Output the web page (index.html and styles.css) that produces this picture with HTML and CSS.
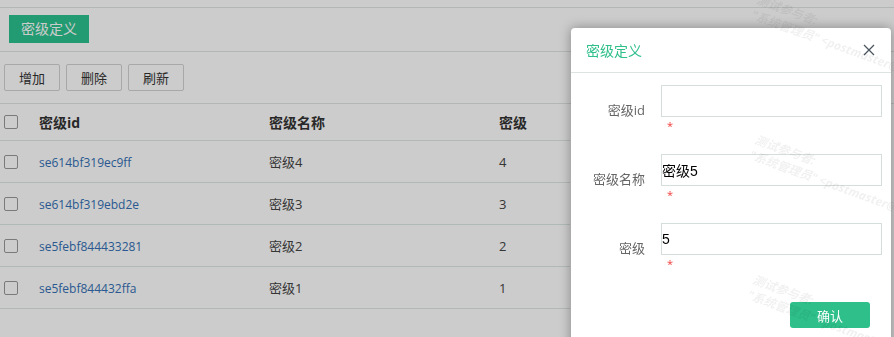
FILE: index.html
```html
<!DOCTYPE html>
<html lang="zh-CN">
<head>
    <meta charset="UTF-8">
    <meta name="viewport" content="width=device-width, initial-scale=1.0">
    <title>密级定义</title>
    <link rel="stylesheet" href="styles.css">
</head>
<body>
    <div class="page">
        <div class="top-strip"></div>

        <div class="tab-bar">
            <span class="tab">密级定义</span>
        </div>

        <div class="toolbar">
            <button class="btn">增加</button>
            <button class="btn">删除</button>
            <button class="btn">刷新</button>
        </div>

        <table class="grid">
            <thead>
                <tr>
                    <th class="col-check"><span class="checkbox"></span></th>
                    <th class="col-id">密级id</th>
                    <th class="col-name">密级名称</th>
                    <th class="col-level">密级</th>
                </tr>
            </thead>
            <tbody>
                <tr>
                    <td class="col-check"><span class="checkbox"></span></td>
                    <td class="col-id"><a class="link">se614bf319ec9ff</a></td>
                    <td>密级4</td>
                    <td>4</td>
                </tr>
                <tr>
                    <td class="col-check"><span class="checkbox"></span></td>
                    <td class="col-id"><a class="link">se614bf319ebd2e</a></td>
                    <td>密级3</td>
                    <td>3</td>
                </tr>
                <tr>
                    <td class="col-check"><span class="checkbox"></span></td>
                    <td class="col-id"><a class="link">se5febf844433281</a></td>
                    <td>密级2</td>
                    <td>2</td>
                </tr>
                <tr>
                    <td class="col-check"><span class="checkbox"></span></td>
                    <td class="col-id"><a class="link">se5febf844432ffa</a></td>
                    <td>密级1</td>
                    <td>1</td>
                </tr>
            </tbody>
        </table>
    </div>

    <div class="mask"></div>

    <div class="dialog">
        <div class="dialog-head">
            <span class="dialog-title">密级定义</span>
            <svg class="dialog-close" width="12" height="12" viewBox="0 0 12 12">
                <path d="M1 1 L11 11 M11 1 L1 11" stroke="#4a5560" stroke-width="1.3" fill="none"/>
            </svg>
        </div>

        <div class="dialog-body">
            <div class="field">
                <label class="field-label">密级id</label>
                <div class="field-control">
                    <input class="field-input" type="text" value="">
                    <span class="req">*</span>
                </div>
            </div>
            <div class="field">
                <label class="field-label">密级名称</label>
                <div class="field-control">
                    <input class="field-input" type="text" value="密级5">
                    <span class="req">*</span>
                </div>
            </div>
            <div class="field">
                <label class="field-label">密级</label>
                <div class="field-control">
                    <input class="field-input" type="text" value="5">
                    <span class="req">*</span>
                </div>
            </div>
        </div>

        <div class="dialog-foot">
            <button class="btn-ok">确认</button>
        </div>
    </div>

    <!-- watermark tiles -->
    <div class="wm wm-1"><div>测试参与者:</div><div>"系统管理员" &lt;postmaster@root&gt;</div></div>
    <div class="wm wm-2"><div>测试参与者:</div><div>"系统管理员" &lt;postmaster@root&gt;</div></div>
    <div class="wm wm-3"><div>测试参与者:</div><div>"系统管理员" &lt;postmaster@root&gt;</div></div>
</body>
</html>
```

FILE: styles.css
```css
html, body {
    margin: 0;
    padding: 0;
    height: 100%;
    overflow: hidden;
}
body {
    font-family: "Open Sans", "Noto Sans CJK SC", sans-serif;
    font-size: 13px;
    color: #333;
    background: #fff;
}
.top-strip {
    height: 7px;
    border-bottom: 1px solid #dfe5e2;
}
.tab-bar {
    height: 44px;
    padding: 7px 0 0 9px;
    box-sizing: border-box;
    border-bottom: 1px solid #dfe5e2;
}
.tab {
    display: inline-block;
    width: 80px;
    height: 28px;
    line-height: 28px;
    text-align: center;
    background: #2cc28f;
    color: #fff;
    font-size: 14px;
}
.toolbar {
    display: flex;
    gap: 6px;
    height: 52px;
    padding: 12px 0 0 4px;
    box-sizing: border-box;
    border-bottom: 1px solid #dfe5e2;
}
.btn {
    width: 56px;
    height: 27px;
    background: #fff;
    border: 1px solid #d2d2d2;
    border-radius: 2px;
    font-family: inherit;
    font-size: 13px;
    color: #333;
    padding: 0;
}
.grid {
    width: 570px;
    border-collapse: collapse;
}
.grid th, .grid td {
    text-align: left;
    padding: 0;
    border-bottom: 1px solid #dee8e5;
    vertical-align: middle;
}
.grid th {
    height: 36px;
    font-size: 14px;
    font-weight: bold;
    color: #333;
}
.grid td {
    height: 41px;
    color: #444;
}
.col-check {
    width: 35px;
    padding-left: 4px !important;
}
.col-id {
    width: 230px;
}
.col-name {
    width: 230px;
}
.checkbox {
    display: block;
    width: 12px;
    height: 12px;
    border: 1px solid #999;
    border-radius: 2px;
    background: #fff;
}
.link {
    color: #3470b5;
    text-decoration: none;
    font-size: 12px;
}
.mask {
    position: fixed;
    inset: 0;
    background: rgba(0, 0, 0, 0.2);
}
.dialog {
    position: absolute;
    left: 571px;
    top: 28px;
    width: 320px;
    height: 340px;
    background: #fff;
    border-radius: 4px 4px 0 0;
    box-shadow: 0 0 12px rgba(0, 0, 0, 0.35);
}
.dialog-head {
    display: flex;
    align-items: center;
    justify-content: space-between;
    height: 44px;
    padding: 0 16px 0 15px;
    border-bottom: 1px solid #dde3e0;
}
.dialog-title {
    color: #2ebf8b;
    font-size: 14px;
}
.dialog-body {
    padding: 12px 9px 0 0;
}
.field {
    display: flex;
}
.field-label {
    width: 74px;
    margin-right: 16px;
    padding-top: 16px;
    text-align: right;
    color: #666;
    font-size: 13px;
    line-height: 18px;
}
.field-control {
    flex: 1;
    display: flex;
    flex-direction: column;
    padding-bottom: 23px;
}
.field-input {
    height: 32px;
    box-sizing: border-box;
    border: 1px solid #d6dedb;
    padding: 0;
    font-family: "Liberation Sans", "Noto Sans CJK SC", sans-serif;
    font-size: 14px;
    color: #000;
    outline: none;
}
.req {
    color: #f03c3c;
    font-size: 11px;
    line-height: 14px;
    margin: 2px 0 -2px 6px;
}
.dialog-foot {
    display: flex;
    justify-content: flex-end;
    padding: 10px 21px 0 0;
}
.btn-ok {
    width: 80px;
    height: 26px;
    background: #2ebf8b;
    border: none;
    border-radius: 3px;
    color: #fff;
    font-family: inherit;
    font-size: 13px;
    padding: 0;
}
.wm {
    position: absolute;
    transform: rotate(20deg);
    transform-origin: left top;
    white-space: nowrap;
    color: rgba(0, 0, 0, 0.06);
    font-size: 12px;
    font-weight: bold;
    font-style: italic;
    line-height: 16px;
    pointer-events: none;
}
.wm-1 { left: 760px; top: -8px; }
.wm-2 { left: 758px; top: 132px; }
.wm-3 { left: 756px; top: 272px; }
```
